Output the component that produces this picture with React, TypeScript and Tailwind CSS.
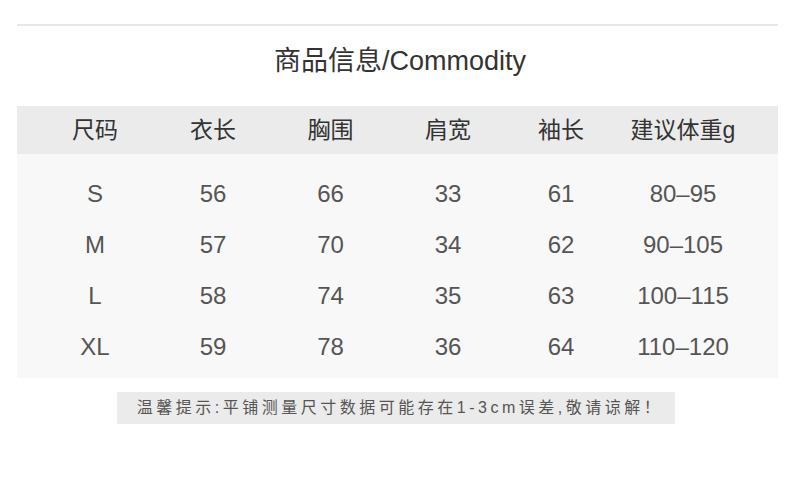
const font = { fontFamily: '"Liberation Sans", "Noto Sans CJK SC", sans-serif' };

const headers = ["尺码", "衣长", "胸围", "肩宽", "袖长", "建议体重g"];

const rows = [
  ["S", "56", "66", "33", "61", "80–95"],
  ["M", "57", "70", "34", "62", "90–105"],
  ["L", "58", "74", "35", "63", "100–115"],
  ["XL", "59", "78", "36", "64", "110–120"],
];

// column widths picked so the centres line up with the picture
const cols = "grid grid-cols-[118px_118px_117px_118px_108px_136px] pl-[19px]";

export default function App() {
  return (
    <div className="w-[800px] h-[487px] bg-white pt-[24px]" style={font}>
      <div className="ml-[17px] w-[761px] h-[2px] bg-[#e6e6e6]" />

      <div className="mt-[20px] mb-[30px] text-center text-[27px] leading-[30px] text-[#333]">
        商品信息/Commodity
      </div>

      <div className="ml-[17px] w-[761px]">
        {/* header band */}
        <div className={`${cols} h-[48px] items-center bg-[#ebebeb] text-[23px] text-[#333]`}>
          {headers.map((h) => (
            <div key={h} className="text-center">
              {h}
            </div>
          ))}
        </div>

        {/* body */}
        <div className="bg-[#f8f8f8] pt-[14px] pb-[6px]">
          {rows.map((r) => (
            <div key={r[0]} className={`${cols} h-[51px] items-center text-[24px] text-[#555]`}>
              {r.map((c, i) => (
                <div key={i} className="text-center">
                  {c}
                </div>
              ))}
            </div>
          ))}
        </div>
      </div>

      <div className="mt-[14px] ml-[117px] w-[558px] h-[32px] flex items-center justify-center pl-[8px] bg-[#ebebeb] text-[16px] tracking-[3.5px] text-[#555]">
        温馨提示:平铺测量尺寸数据可能存在1-3cm误差,敬请谅解！
      </div>
    </div>
  );
}
